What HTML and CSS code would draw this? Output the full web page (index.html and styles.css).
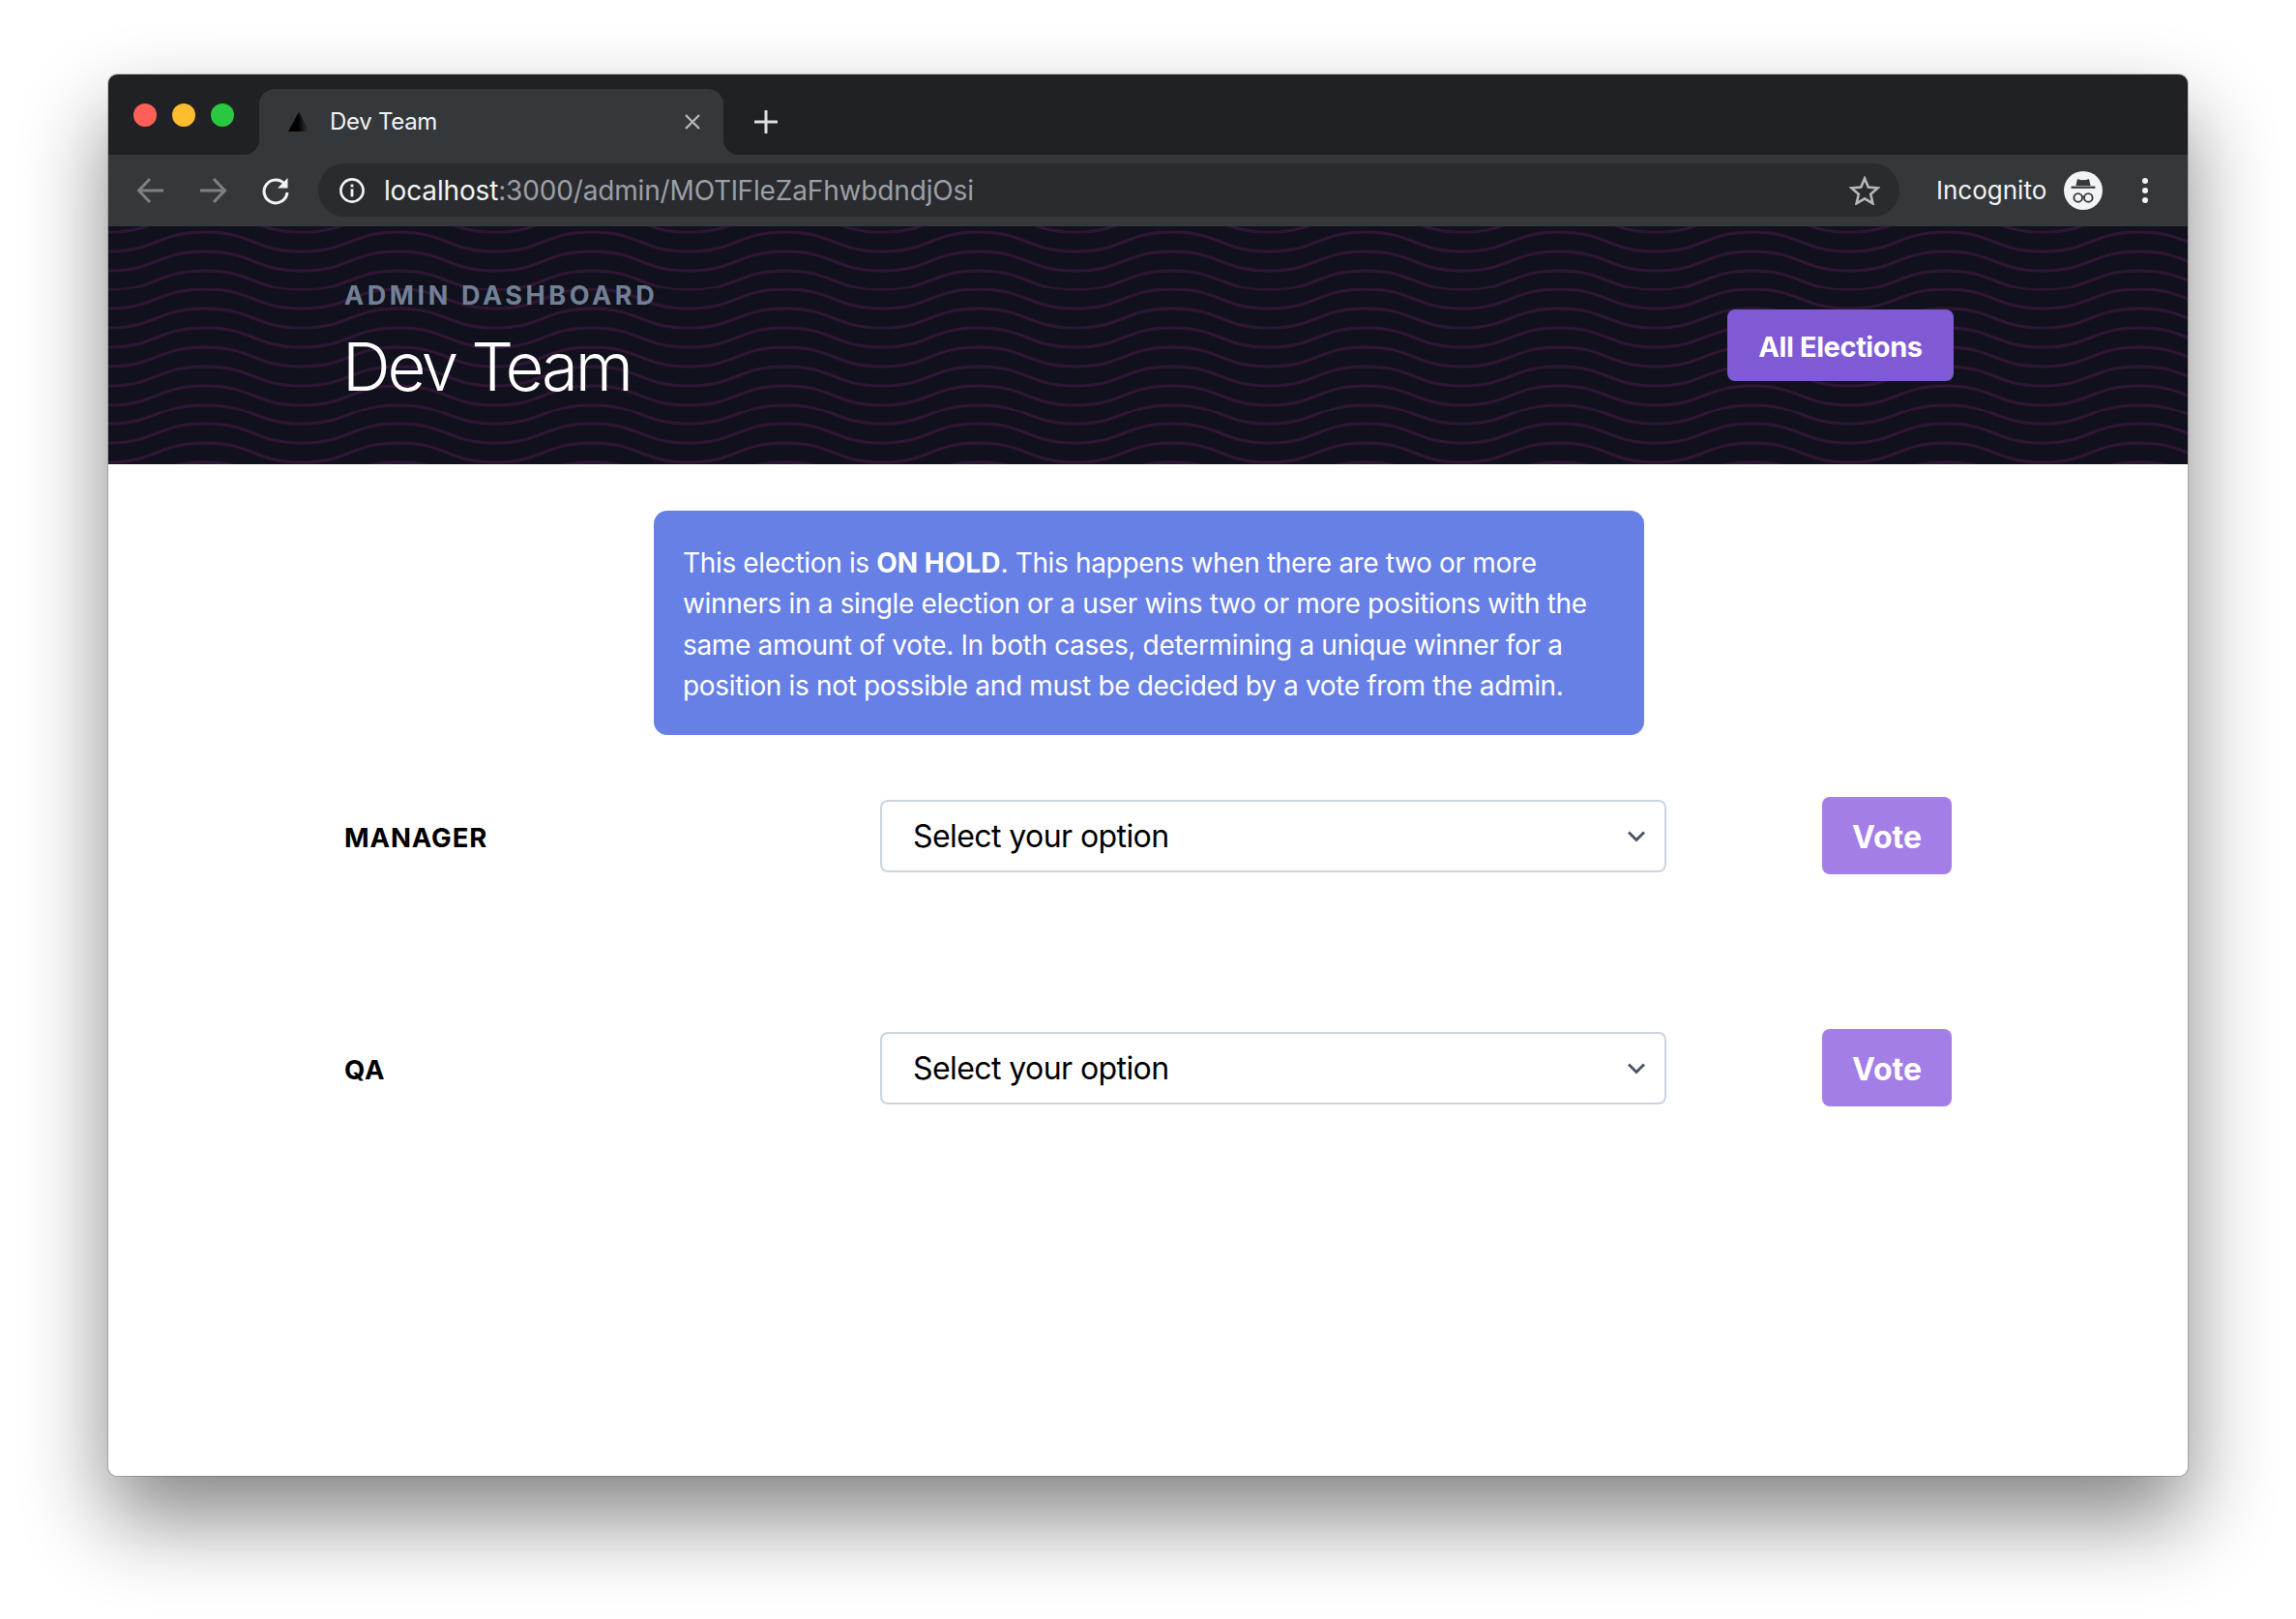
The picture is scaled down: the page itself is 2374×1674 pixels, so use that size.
FILE: index.html
```html
<!DOCTYPE html>
<html lang="en">
<head>
    <meta charset="UTF-8">
    <meta name="viewport" content="width=device-width, initial-scale=1.0">
    <title>Dev Team</title>
    <link rel="stylesheet" href="styles.css">
</head>
<body>
    <div class="window">
        <div class="tab-strip">
            <div class="lights">
                <span class="light red"></span>
                <span class="light yellow"></span>
                <span class="light green"></span>
            </div>
            <div class="tab">
                <svg class="favicon" width="24" height="20" viewBox="0 0 24 20">
                    <defs>
                        <linearGradient id="fav" x1="0" x2="1" y1="0" y2="0">
                            <stop offset="0.45" stop-color="#000"/>
                            <stop offset="1" stop-color="#3a3d40"/>
                        </linearGradient>
                    </defs>
                    <path d="M12 0 L23 20 L1 20 Z" fill="url(#fav)"/>
                </svg>
                <span class="tab-title">Dev Team</span>
                <svg class="tab-close" width="18" height="18" viewBox="0 0 18 18">
                    <path d="M2 2 L16 16 M16 2 L2 16" stroke="#b4b7ba" stroke-width="2.4" fill="none"/>
                </svg>
            </div>
            <svg class="new-tab" width="24" height="24" viewBox="0 0 24 24">
                <path d="M12 1 V23 M1 12 H23" stroke="#dee1e4" stroke-width="3" stroke-linecap="round" fill="none"/>
            </svg>
        </div>

        <div class="toolbar">
            <div class="nav-btn">
                <svg width="30" height="28" viewBox="0 0 30 28"><path d="M29 14 H4 M15 2 L3.5 14 L15 26" stroke="#7d8084" stroke-width="3" fill="none"/></svg>
            </div>
            <div class="nav-btn">
                <svg width="30" height="28" viewBox="0 0 30 28"><path d="M2 14 H27 M16 2 L27.5 14 L16 26" stroke="#7d8084" stroke-width="3" fill="none"/></svg>
            </div>
            <div class="nav-btn">
                <svg width="30" height="30" viewBox="0 0 30 30">
                    <path d="M24.5 8.5 A12 12 0 1 0 27 17" stroke="#f1f3f4" stroke-width="3" fill="none"/>
                    <path d="M27.5 2 V12.5 H17 Z" fill="#f1f3f4"/>
                </svg>
            </div>
            <div class="omnibox">
                <svg class="info" width="28" height="28" viewBox="0 0 28 28">
                    <circle cx="14" cy="14" r="11.6" stroke="#f1f3f4" stroke-width="2.6" fill="none"/>
                    <rect x="12.6" y="12.4" width="2.8" height="8" fill="#f1f3f4"/>
                    <rect x="12.6" y="7.6" width="2.8" height="2.8" fill="#f1f3f4"/>
                </svg>
                <span class="url"><span class="host">localhost</span>:3000/admin/MOTlFleZaFhwbdndjOsi</span>
                <svg class="star" width="32" height="30" viewBox="0 0 32 30">
                    <path d="M16 2.5 L19.8 11.6 L29.6 12.4 L22.2 18.8 L24.4 28.4 L16 23.3 L7.6 28.4 L9.8 18.8 L2.4 12.4 L12.2 11.6 Z" stroke="#b4b7ba" stroke-width="2.6" fill="none"/>
                </svg>
            </div>
            <div class="profile">
                <span class="profile-name">Incognito</span>
                <svg class="avatar" width="40" height="40" viewBox="0 0 40 40">
                    <circle cx="20" cy="20" r="20" fill="#f1f3f4"/>
                    <path d="M14 8 Q17 9.5 20 9 Q23 9.5 26 8 L27.6 15 H12.4 Z" fill="#35393c"/>
                    <rect x="7.6" y="15.6" width="24.8" height="2.2" fill="#35393c"/>
                    <circle cx="14.7" cy="27.4" r="4.3" stroke="#35393c" stroke-width="1.9" fill="none"/>
                    <circle cx="25.3" cy="27.4" r="4.3" stroke="#35393c" stroke-width="1.9" fill="none"/>
                    <path d="M19 26.6 Q20 26 21 26.6" stroke="#35393c" stroke-width="1.6" fill="none"/>
                </svg>
                <div class="menu-dots"><span></span><span></span><span></span></div>
            </div>
        </div>

        <header class="page-header">
            <div class="heading">
                <div class="eyebrow">ADMIN DASHBOARD</div>
                <h1 class="title">Dev Team</h1>
            </div>
            <a class="btn btn-elections">All Elections</a>
        </header>

        <main class="content">
            <div class="alert">
                This election is <strong>ON HOLD</strong>. This happens when there are two or more
                winners in a single election or a user wins two or more positions with the
                same amount of vote. In both cases, determining a unique winner for a
                position is not possible and must be decided by a vote from the admin.
            </div>

            <form class="vote-row">
                <label class="position">MANAGER</label>
                <div class="select-box">
                    <span>Select your option</span>
                    <svg width="20" height="13" viewBox="0 0 20 13"><path d="M2 2.5 L10 10.5 L18 2.5" stroke="#4a5568" stroke-width="3" fill="none"/></svg>
                </div>
                <button type="button" class="btn btn-vote">Vote</button>
            </form>

            <form class="vote-row">
                <label class="position">QA</label>
                <div class="select-box">
                    <span>Select your option</span>
                    <svg width="20" height="13" viewBox="0 0 20 13"><path d="M2 2.5 L10 10.5 L18 2.5" stroke="#4a5568" stroke-width="3" fill="none"/></svg>
                </div>
                <button type="button" class="btn btn-vote">Vote</button>
            </form>
        </main>
    </div>
</body>
</html>
```

FILE: styles.css
```css
* {
    box-sizing: border-box;
}
body {
    margin: 0;
    padding: 77px 112px 0;
    height: 1674px;
    overflow: hidden;
    background-color: #fff;
    font-family: Inter, "Liberation Sans", sans-serif;
}
.window {
    height: 1449px;
    display: flex;
    flex-direction: column;
    background-color: #fff;
    border-radius: 9px;
    box-shadow: 0 0 0 1px rgba(0, 0, 0, 0.18), 0 44px 88px rgba(0, 0, 0, 0.48);
}

/* browser chrome */
.tab-strip {
    height: 83px;
    display: flex;
    align-items: flex-end;
    background-color: #202124;
    border-radius: 9px 9px 0 0;
}
.lights {
    width: 156px;
    height: 83px;
    padding: 30px 0 0 26px;
    display: flex;
    gap: 16px;
}
.light {
    width: 24px;
    height: 24px;
    border-radius: 50%;
}
.red { background-color: #fe5f57; }
.yellow { background-color: #febc2f; }
.green { background-color: #2ac840; }
.tab {
    position: relative;
    width: 480px;
    height: 68px;
    padding: 0 23px 0 29px;
    display: flex;
    align-items: center;
    background-color: #35383b;
    border-radius: 16px 16px 0 0;
}
.tab::before,
.tab::after {
    content: "";
    position: absolute;
    bottom: 0;
    width: 16px;
    height: 16px;
}
.tab::before {
    left: -16px;
    background: radial-gradient(circle at 0 0, #202124 16px, #35383b 16.5px);
}
.tab::after {
    right: -16px;
    background: radial-gradient(circle at 100% 0, #202124 16px, #35383b 16.5px);
}
.tab-title {
    margin-left: 20px;
    padding-bottom: 1px;
    flex: 1;
    color: #f1f3f4;
    font-size: 24px;
    letter-spacing: -0.3px;
}
.new-tab {
    margin: 0 0 22px 32px;
}
.toolbar {
    height: 74px;
    padding: 0 0 1px 10px;
    display: flex;
    align-items: center;
    background-color: #35383b;
}
.nav-btn {
    width: 65px;
    flex-shrink: 0;
    display: flex;
    justify-content: center;
}
.omnibox {
    width: 1635px;
    flex-shrink: 0;
    height: 55px;
    margin-left: 12px;
    padding: 0 20px 0 21px;
    display: flex;
    align-items: center;
    background-color: #292b2e;
    border-radius: 28px;
}
.url {
    margin-left: 19px;
    flex: 1;
    color: #9aa0a6;
    font-size: 28px;
    letter-spacing: -0.16px;
    white-space: nowrap;
}
.host {
    color: #f1f3f4;
}
.profile {
    flex: 1;
    min-width: 0;
    padding-left: 38px;
    display: flex;
    align-items: center;
}
.profile-name {
    color: #f1f3f4;
    font-size: 26px;
    white-space: nowrap;
}
.avatar {
    margin-left: 18px;
    flex-shrink: 0;
}
.menu-dots {
    margin-left: 41px;
    display: flex;
    flex-direction: column;
    gap: 4px;
}
.menu-dots span {
    width: 6px;
    height: 6px;
    border-radius: 50%;
    background-color: #f1f3f4;
}

/* page */
.page-header {
    height: 246px;
    padding: 0 242px 0 244px;
    display: flex;
    justify-content: space-between;
    align-items: center;
    background-color: #10111d;
    background-size: 200px 19.85px;
    background-image: url("data:image/svg+xml,%3Csvg xmlns='http://www.w3.org/2000/svg' width='200' height='20' viewBox='0 0 200 20' preserveAspectRatio='none'%3E%3Cg fill='none' stroke='%23301634' stroke-width='3'%3E%3Cpath d='M-100 6C-50 6-50 26 0 26S50 6 100 6 150 26 200 26 250 6 300 6'/%3E%3Cpath d='M-100-14C-50-14-50 6 0 6S50-14 100-14 150 6 200 6 250-14 300-14'/%3E%3C/g%3E%3C/svg%3E");
}
.heading {
    padding-bottom: 4px;
}
.eyebrow {
    color: #718096;
    font-size: 27px;
    line-height: 33px;
    font-weight: 700;
    letter-spacing: 3.6px;
}
.title {
    margin: 16px 0 0 -2px;
    color: #fff;
    font-size: 69px;
    line-height: 83px;
    font-weight: 300;
    letter-spacing: -3.2px;
}
.btn {
    display: flex;
    align-items: center;
    justify-content: center;
    border: none;
    border-radius: 8px;
    color: #fff;
    font-family: inherit;
    font-weight: 700;
}
.btn-elections {
    width: 234px;
    height: 74px;
    padding-top: 2px;
    background-color: #805ad5;
    font-size: 29px;
    letter-spacing: -0.4px;
}
.content {
    padding: 48px 244px 0;
}
.alert {
    width: 1024px;
    height: 232px;
    margin-left: 320px;
    padding: 33px 30px 0;
    background-color: #6780e6;
    border-radius: 14px;
    color: #fff;
    font-size: 28px;
    line-height: 42.4px;
    letter-spacing: -0.34px;
}
.alert strong {
    font-weight: 700;
    letter-spacing: 0;
}
.vote-row {
    height: 80px;
    margin-top: 160px;
    display: flex;
    align-items: center;
}
.alert + .vote-row {
    margin-top: 64px;
}
.position {
    width: 554px;
    padding-top: 4px;
    font-size: 27.5px;
    font-weight: 700;
    letter-spacing: 0.9px;
    color: #000;
}
.select-box {
    width: 813px;
    height: 75px;
    padding: 0 19px 0 32px;
    display: flex;
    justify-content: space-between;
    align-items: center;
    border: 2px solid #cbd5e0;
    border-radius: 8px;
    color: #000;
    font-size: 32px;
    letter-spacing: -0.58px;
}
.select-box span {
    padding-top: 1px;
}
.btn-vote {
    width: 134px;
    height: 80px;
    margin-left: 161px;
    padding-top: 3px;
    background-color: #a27ee6;
    font-size: 32px;
}
```
